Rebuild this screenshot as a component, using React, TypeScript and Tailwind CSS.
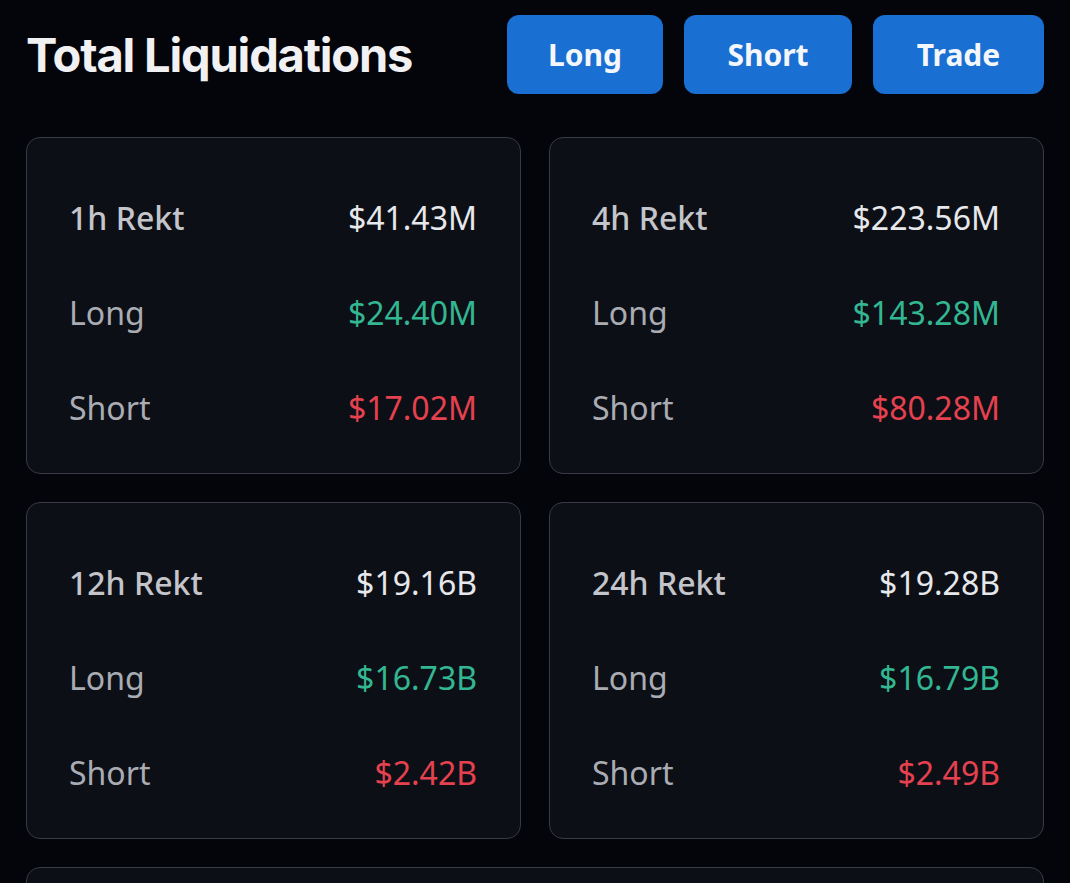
import React from "react";

type Card = { label: string; total: string; long: string; short: string };

const cards: Card[] = [
  { label: "1h Rekt", total: "$41.43M", long: "$24.40M", short: "$17.02M" },
  { label: "4h Rekt", total: "$223.56M", long: "$143.28M", short: "$80.28M" },
  { label: "12h Rekt", total: "$19.16B", long: "$16.73B", short: "$2.42B" },
  { label: "24h Rekt", total: "$19.28B", long: "$16.79B", short: "$2.49B" },
];

const buttons = [
  { t: "Long", w: "w-[156px]" },
  { t: "Short", w: "w-[168px]" },
  { t: "Trade", w: "w-[171px]" },
];

function StatCard({ c }: { c: Card }) {
  return (
    <div className="flex flex-col gap-[55px] rounded-[14px] border border-[#383b45] bg-[#0d0f16] pl-[42px] pr-[43px] pt-[60px] pb-[45px] text-[32px] leading-[40px] [font-family:'Noto_Sans',sans-serif]">
      <div className="flex items-center justify-between">
        <span className="font-medium text-[#c3c5ca]">{c.label}</span>
        <span className="text-[#e7e8eb]">{c.total}</span>
      </div>
      <div className="flex items-center justify-between">
        <span className="text-[#a9acb3]">Long</span>
        <span className="text-[#33b792]">{c.long}</span>
      </div>
      <div className="flex items-center justify-between">
        <span className="text-[#a9acb3]">Short</span>
        <span className="text-[#e5414f]">{c.short}</span>
      </div>
    </div>
  );
}

export default function App() {
  return (
    <div className="h-[883px] w-[1070px] overflow-hidden bg-[#04050a] px-[26px] pt-[15px]">
      <div className="flex items-center justify-between">
        <h1 className="text-[47px] font-bold leading-none tracking-[-0.025em] text-[#f1f1f3] [font-family:Inter,sans-serif]">
          Total Liquidations
        </h1>
        <div className="flex gap-[21px] [font-family:'Noto_Sans',sans-serif]">
          {buttons.map((b) => (
            <button
              key={b.t}
              className={`flex h-[79px] items-center justify-center rounded-[12px] bg-[#1a6fd2] text-[30px] font-bold text-[#f4f7fc] ${b.w}`}
            >
              {b.t}
            </button>
          ))}
        </div>
      </div>
      <div className="mt-[43px] grid grid-cols-2 gap-[28px]">
        {cards.map((c) => (
          <StatCard key={c.label} c={c} />
        ))}
        <div className="col-span-2 h-[300px] rounded-[14px] border border-[#383b45] bg-[#0d0f16]" />
      </div>
    </div>
  );
}
